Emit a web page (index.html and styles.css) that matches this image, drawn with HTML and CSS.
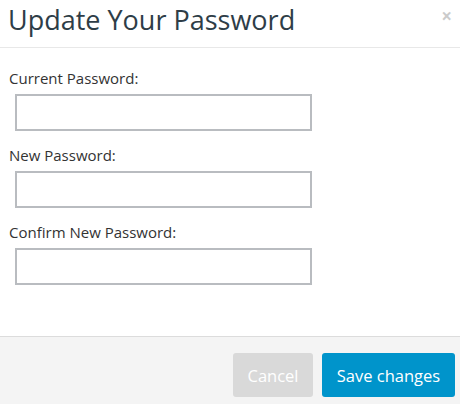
FILE: index.html
```html
<!DOCTYPE html>
<html>
<head>
<meta charset="utf-8">
<link rel="stylesheet" href="styles.css">
</head>
<body>
<div class="modal">
  <div class="modal-header">
    <h1 class="title">Update Your Password</h1>
    <span class="close">&times;</span>
  </div>
  <div class="modal-body">
    <label class="label">Current Password:</label>
    <input class="field" type="password">
    <label class="label">New Password:</label>
    <input class="field" type="password">
    <label class="label">Confirm New Password:</label>
    <input class="field" type="password">
  </div>
  <div class="modal-footer">
    <button class="btn btn-cancel">Cancel</button>
    <button class="btn btn-save">Save changes</button>
  </div>
</div>
</body>
</html>
```
FILE: styles.css
```css
html, body {
  margin: 0;
  padding: 0;
  background: #ffffff;
}
body {
  font-family: "Open Sans", sans-serif;
  width: 460px;
  height: 404px;
  overflow: hidden;
}
.modal {
  display: flex;
  flex-direction: column;
  height: 404px;
}
.modal-header {
  height: 48px;
  box-sizing: border-box;
  border-bottom: 1px solid #e8e8e8;
  display: flex;
  justify-content: space-between;
  align-items: flex-start;
}
.title {
  margin: 0;
  padding: 0 0 0 8px;
  font-size: 27px;
  font-weight: 400;
  line-height: 40px;
  color: #2e3d47;
}
.close {
  font-size: 19px;
  font-weight: 700;
  line-height: 30px;
  margin-top: 1px;
  color: #000;
  opacity: 0.2;
  padding-right: 8px;
}
.modal-body {
  display: flex;
  flex-direction: column;
  align-items: flex-start;
  padding: 20px 0 0 9px;
  height: 288px;
  box-sizing: border-box;
}
.label {
  font-size: 15px;
  color: #333333;
  line-height: 20px;
  margin-bottom: 6px;
}
.field {
  width: 297px;
  height: 37px;
  box-sizing: border-box;
  border: 2px solid #b9bcc0;
  margin: 0 0 14px 6px;
  padding: 0;
  border-radius: 0;
  outline: none;
}
.modal-footer {
  flex: 1;
  background: #f4f4f4;
  border-top: 1px solid #dcdcdc;
  display: flex;
  justify-content: flex-end;
  align-items: flex-start;
  gap: 9px;
  padding: 16px 5px 0 0;
}
.btn {
  font-family: "Open Sans", sans-serif;
  font-size: 16.5px;
  height: 44px;
  border: none;
  border-radius: 3px;
  color: #ffffff;
  padding: 0 13px;
}
.btn-cancel {
  background: #d9d9d9;
  width: 80px;
}
.btn-save {
  background: #0094cb;
  width: 133px;
}
```
